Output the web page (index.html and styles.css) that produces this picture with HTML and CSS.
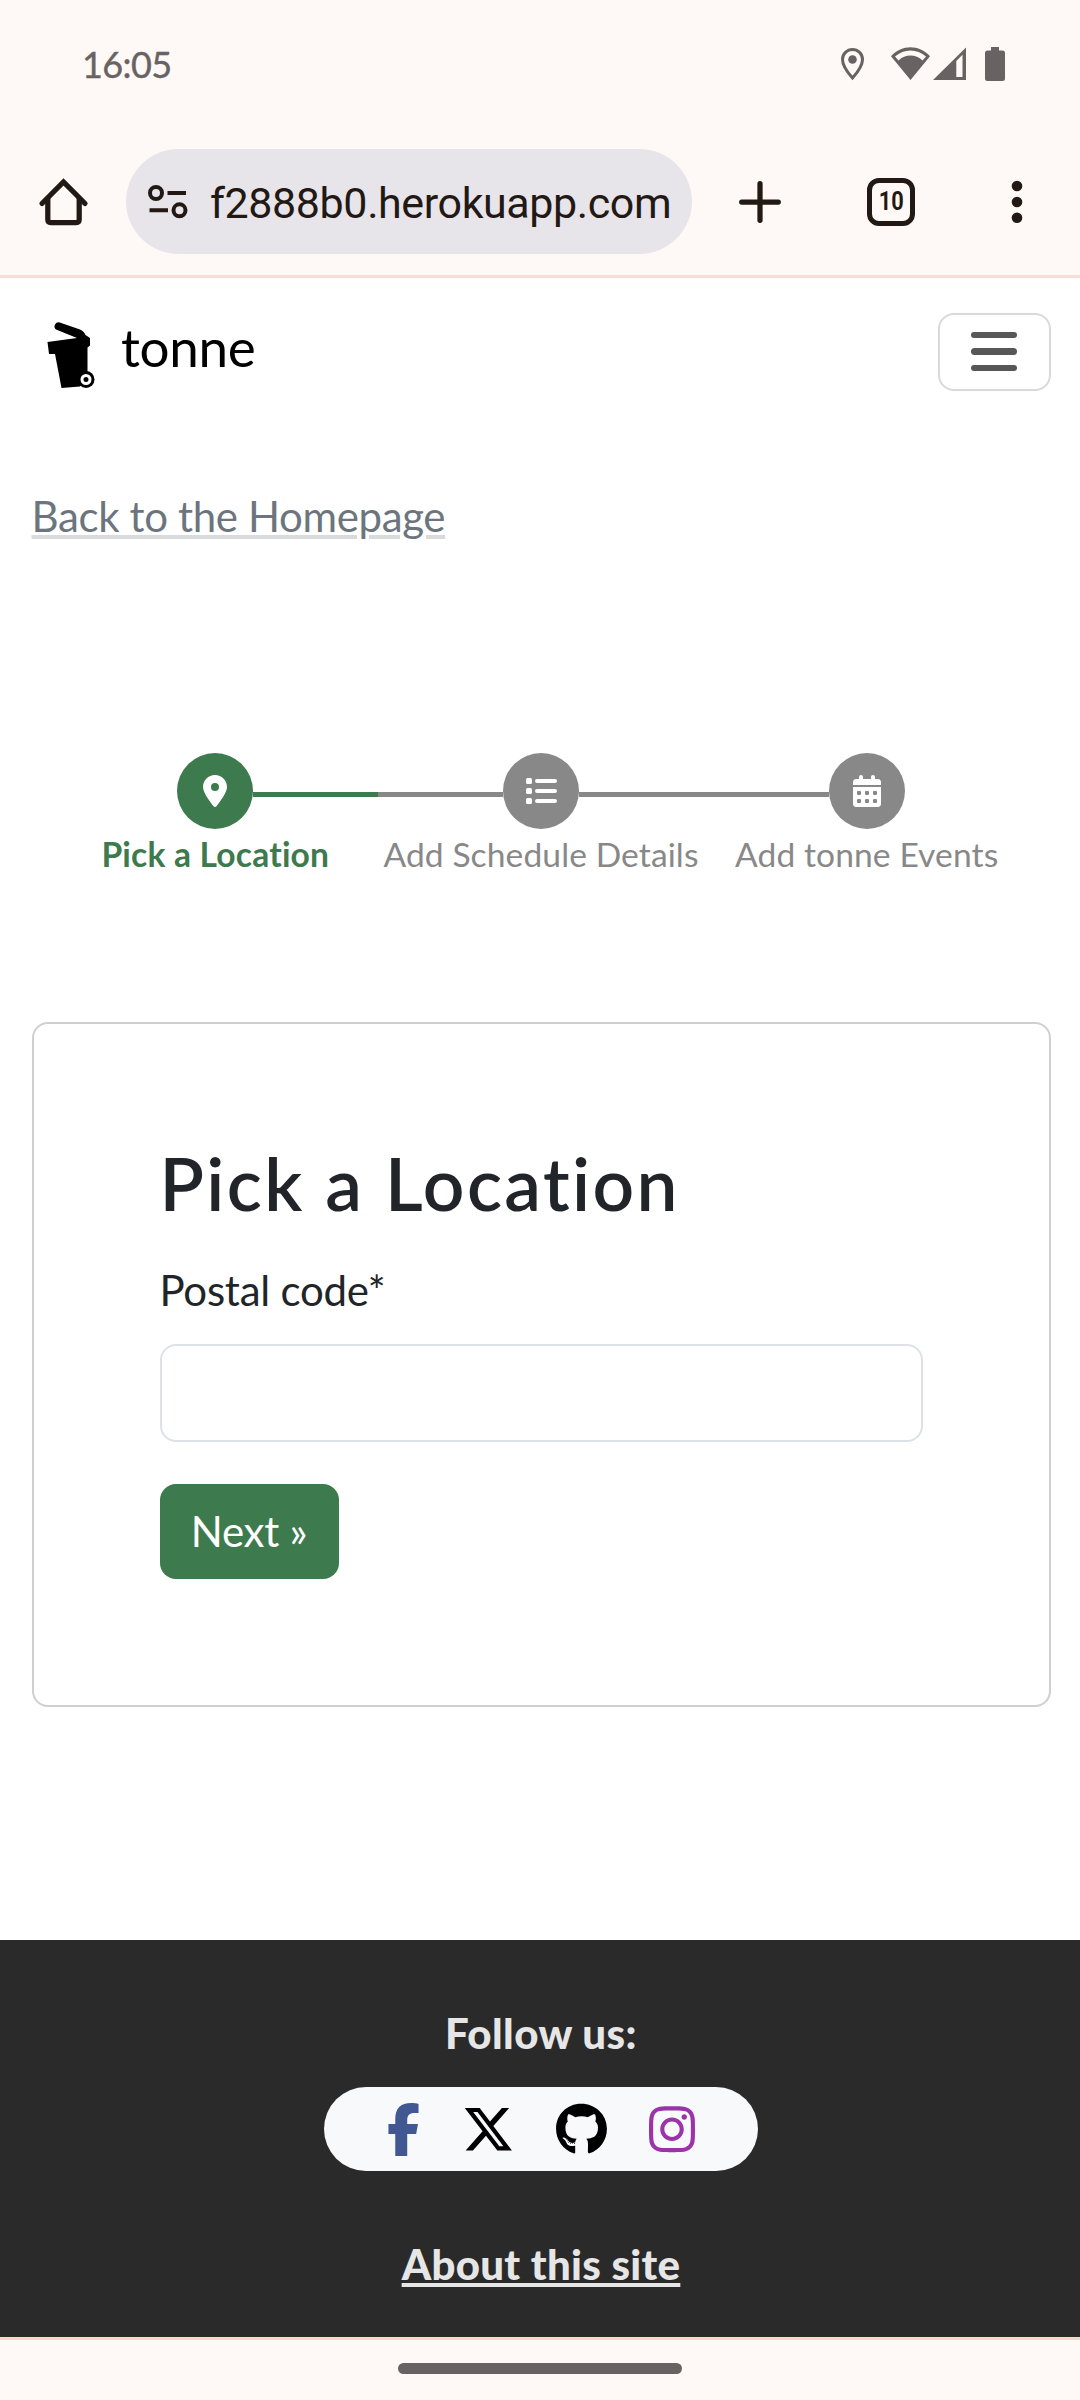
FILE: index.html
```html
<!DOCTYPE html>
<html lang="en">
<head>
<meta charset="utf-8">
<title>tonne</title>
<link rel="stylesheet" href="styles.css">
</head>
<body>
<header class="status">
  <span class="clock">16:05</span>
  <svg class="status-icons" viewBox="841 44 166 40" width="166" height="40" fill="#686362">
    <path d="M852.500 49.500a10 10 0 0 1 10 10c0 6.500-5.500 13.500-10 18.500c-4.500-5-10-12-10-18.500a10 10 0 0 1 10-10z" fill="none" stroke="#686362" stroke-width="3"/>
    <circle cx="852.500" cy="59.500" r="4.300"/>
    <path fill-rule="evenodd" d="M891 56.200C902 44.300 919 44.300 930 56.200L910.500 80zM895 56.500L898.500 60.500C905 53.800 916 53.800 922.500 60.500L926 56.500C917 48.500 904 48.500 895 56.500z"/>
    <path fill-rule="evenodd" d="M933 80L966 47.500V80zM956.300 61V77H962.500V54.800z"/>
    <path d="M991 47h8v3.500h3.500q2.500 0 2.500 2.500v25.500q0 2.500-2.500 2.500h-15q-2.500 0-2.500-2.500V53q0-2.500 2.500-2.500h3.500z"/>
  </svg>
</header>
<div class="toolbar">
  <svg class="home" viewBox="0 0 63 63" width="63" height="63" fill="none" stroke="#231914" stroke-width="5.250"><path d="M10 33.500L31.500 12L53 33.500" stroke-linecap="round"/><path d="M15.800 28V49.500q0 3 3 3h25.400q3 0 3-3V28"/></svg>
  <div class="omnibox">
    <svg viewBox="0 0 40 34" width="40" height="34" fill="none" stroke="#231914" stroke-width="4"><circle cx="8" cy="8" r="6"/><path d="M19.500 8H38M1.500 25.300H20"/><circle cx="31.500" cy="25.300" r="6"/></svg>
    <span>f2888b0.herokuapp.com</span>
  </div>
  <svg class="plus" viewBox="0 0 42 42" width="42" height="42" stroke="#231914" stroke-width="5.250" stroke-linecap="round"><path d="M21 2.700V39.300M2.700 21H39.300"/></svg>
  <div class="tabs"><span>10</span></div>
  <svg class="dots" viewBox="0 0 12 44" width="12" height="44" fill="#231914"><circle cx="6" cy="6" r="5.300"/><circle cx="6" cy="22" r="5.300"/><circle cx="6" cy="37.700" r="5.300"/></svg>
</div>
<nav class="navbar">
  <a class="brand">
    <svg viewBox="40 315 60 80" width="60" height="80"><path d="M59 322.300L80 329.500Q84 331 85.500 335L90 338V345.500L87.500 347.500V374L80 386.500L61.500 388L55 354H49L47.500 342L77 338L56 329.500Q53.500 327.500 55 324.500Q56.500 322 59 322.300z"/><circle cx="86" cy="379.500" r="8.500"/><circle cx="86" cy="379.500" r="4" fill="none" stroke="#fff" stroke-width="3"/></svg>
    <span>tonne</span>
  </a>
  <button class="toggler" aria-label="Menu"><i></i><i></i><i></i></button>
</nav>
<main>
  <a class="back">Back to the Homepage</a>
  <ol class="steps">
    <li class="step active"><div class="track"><span class="dot"><svg viewBox="0 0 384 512" width="24" height="32" fill="#fff"><path d="M215.700 499.200C267 435 384 279.400 384 192C384 86 298 0 192 0S0 86 0 192c0 87.400 117 243 168.300 307.200c12.300 15.300 35.100 15.300 47.400 0zM192 128a64 64 0 1 1 0 128 64 64 0 1 1 0-128z"/></svg></span></div><span class="label">Pick a Location</span></li>
    <li class="step"><div class="track"><span class="dot"><svg viewBox="0 0 512 512" width="32" height="32" fill="#fff"><rect x="16" y="48" width="96" height="96" rx="24"/><rect x="16" y="208" width="96" height="96" rx="24"/><rect x="16" y="368" width="96" height="96" rx="24"/><rect x="160" y="64" width="352" height="64" rx="32"/><rect x="160" y="224" width="352" height="64" rx="32"/><rect x="160" y="384" width="352" height="64" rx="32"/></svg></span></div><span class="label">Add Schedule Details</span></li>
    <li class="step"><div class="track"><span class="dot"><svg viewBox="0 0 448 512" width="28" height="32" fill="#fff"><path d="M128 0c17.700 0 32 14.300 32 32V64H288V32c0-17.700 14.300-32 32-32s32 14.300 32 32V64h48c26.500 0 48 21.500 48 48v32H0V112C0 85.500 21.500 64 48 64H96V32c0-17.700 14.300-32 32-32zM0 192H448V464c0 26.500-21.500 48-48 48H48c-26.500 0-48-21.500-48-48z"/><path d="M0 140H448V160H0z"/><g fill="#888"><rect x="64" y="256" width="64" height="64" rx="16"/><rect x="192" y="256" width="64" height="64" rx="16"/><rect x="320" y="256" width="64" height="64" rx="16"/><rect x="64" y="384" width="64" height="64" rx="16"/><rect x="192" y="384" width="64" height="64" rx="16"/><rect x="320" y="384" width="64" height="64" rx="16"/></g></svg></span></div><span class="label">Add tonne Events</span></li>
  </ol>
  <form class="card">
    <h1>Pick a Location</h1>
    <label for="postal">Postal code*</label>
    <input id="postal" type="text">
    <button class="next" type="button">Next »</button>
  </form>
</main>
<footer>
  <p class="follow">Follow us:</p>
  <div class="social">
    <svg viewBox="0 0 320 512" width="33" height="53" fill="#425893"><path d="M80 299.300V512H196V299.300h86.500l18-97.800H196V166.900c0-51.700 20.300-71.500 72.700-71.500c16.300 0 29.400 .4 37 1.200V7.900C291.400 4 256.400 0 236.200 0C129.300 0 80 50.500 80 159.400v42.100H14v97.800H80z"/></svg>
    <svg viewBox="0 0 512 512" width="52.500" height="52.500"><path d="M389.200 48h70.600L305.600 224.200 487 464H345L233.700 318.600 106.500 464H35.800L200.700 275.500 26.800 48H172.400L272.900 180.900 389.200 48zM364.400 421.800h39.100L151.100 88h-42L364.400 421.800z"/></svg>
    <svg viewBox="0 0 496 512" width="51" height="52.500"><path d="M165.900 397.400c0 2-2.300 3.600-5.200 3.600-3.300.3-5.600-1.300-5.600-3.600 0-2 2.300-3.600 5.200-3.600 3-.3 5.600 1.300 5.600 3.600zm-31.100-4.500c-.7 2 1.300 4.300 4.300 4.900 2.600 1 5.600 0 6.200-2s-1.300-4.300-4.300-5.200c-2.600-.7-5.500.3-6.200 2.300zm44.200-1.700c-2.900.7-4.900 2.600-4.600 4.900.3 2 2.900 3.300 5.900 2.600 2.900-.7 4.900-2.600 4.600-4.600-.3-1.900-3-3.200-5.900-2.900zM244.800 8C106.100 8 0 113.300 0 252c0 110.900 69.800 205.800 169.500 239.200 12.800 2.300 17.300-5.600 17.300-12.100 0-6.200-.3-40.400-.3-61.400 0 0-70 15-84.700-29.800 0 0-11.400-29.100-27.800-36.600 0 0-22.900-15.700 1.600-15.400 0 0 24.900 2 38.600 25.800 21.900 38.600 58.600 27.500 72.900 20.900 2.300-16 8.800-27.100 16-33.700-55.900-6.200-112.300-14.300-112.300-110.500 0-27.500 7.600-41.300 23.600-58.900-2.600-6.500-11.100-33.300 2.600-67.900 20.900-6.500 69 27 69 27 20-5.600 41.500-8.500 62.800-8.500s42.800 2.900 62.800 8.500c0 0 48.100-33.600 69-27 13.700 34.700 5.200 61.400 2.600 67.900 16 17.700 25.800 31.500 25.800 58.900 0 96.500-58.900 104.200-114.800 110.500 9.200 7.900 17 22.900 17 46.400 0 33.700-.3 75.400-.3 83.600 0 6.500 4.600 14.400 17.300 12.100C428.200 457.800 496 362.900 496 252 496 113.300 383.500 8 244.800 8zM97.200 352.900c-1.300 1-1 3.300.7 5.200 1.600 1.600 3.900 2.300 5.200 1 1.300-1 1-3.300-.7-5.200-1.600-1.600-3.900-2.300-5.200-1zm-10.800-8.100c-.7 1.300.3 2.900 2.300 3.900 1.600 1 3.600.7 4.300-.7.700-1.300-.3-2.900-2.300-3.900-2-.6-3.600-.3-4.300.7zm32.400 35.600c-1.600 1.300-1 4.300 1.300 6.200 2.300 2.300 5.200 2.600 6.500 1 1.300-1.300.7-4.300-1.300-6.200-2.200-2.300-5.200-2.600-6.500-1zm-11.400-14.700c-1.600 1-1.600 3.600 0 5.900 1.600 2.300 4.300 3.300 5.600 2.300 1.600-1.300 1.600-3.900 0-6.200-1.400-2.300-4-3.300-5.600-2z"/></svg>
    <svg viewBox="0 0 448 512" width="46" height="52.500" fill="#9b34a9"><path d="M224.100 141c-63.600 0-114.900 51.300-114.900 114.900s51.300 114.900 114.900 114.900S339 319.500 339 255.900 287.700 141 224.100 141zm0 189.600c-41.100 0-74.700-33.500-74.700-74.700s33.500-74.700 74.700-74.700 74.700 33.500 74.700 74.700-33.600 74.700-74.700 74.700zm146.400-194.300c0 14.900-12 26.800-26.800 26.800-14.900 0-26.800-12-26.800-26.800s12-26.800 26.800-26.800 26.800 12 26.800 26.800zm76.100 27.200c-1.700-35.900-9.900-67.700-36.200-93.900-26.200-26.200-58-34.400-93.900-36.200-37-2.100-147.900-2.100-184.900 0-35.800 1.700-67.600 9.900-93.900 36.100s-34.400 58-36.200 93.900c-2.100 37-2.100 147.900 0 184.900 1.700 35.900 9.900 67.700 36.200 93.900s58 34.400 93.900 36.200c37 2.100 147.900 2.100 184.900 0 35.900-1.700 67.700-9.900 93.900-36.200 26.200-26.200 34.400-58 36.200-93.900 2.100-37 2.100-147.800 0-184.800zM398.800 388c-7.800 19.600-22.900 34.700-42.600 42.600-29.500 11.700-99.500 9-132.100 9s-102.700 2.600-132.100-9c-19.600-7.800-34.700-22.900-42.600-42.600-11.700-29.500-9-99.500-9-132.100s-2.600-102.700 9-132.100c7.800-19.600 22.900-34.700 42.600-42.600 29.500-11.700 99.500-9 132.100-9s102.700-2.600 132.100 9c19.600 7.800 34.700 22.900 42.600 42.600 11.700 29.500 9 99.500 9 132.100s2.700 102.700-9 132.100z"/></svg>
  </div>
  <a class="about">About this site</a>
</footer>
<div class="gesture"><i></i></div>
</body>
</html>
```
FILE: styles.css
```css
* { box-sizing: border-box; }
body { margin: 0; width: 1080px; height: 2400px; display: flex; flex-direction: column; background: #fff; color: #212529; font-family: Lato, sans-serif; font-size: 42px; line-height: 63px; font-variant-ligatures: none; }
svg { display: block; flex: none; }

/* Device status bar */
.status { height: 128px; padding: 0 73px 0 82px; display: flex; align-items: center; justify-content: space-between; background: #fef9f6; }
.clock { font-size: 36px; letter-spacing: -0.6px; color: #686362; -webkit-text-stroke: 0.4px #686362; }

/* Browser toolbar */
.toolbar { height: 150px; padding: 0 57px 0 32px; display: flex; align-items: center; background: #fef9f6; border-bottom: 3px solid #f7ddd2; }
.omnibox { width: 566px; height: 105px; margin-left: 31px; padding-left: 22px; display: flex; align-items: center; gap: 22px; border-radius: 53px; background: #e8e5ea; color: #231914; font-family: Roboto, sans-serif; font-size: 43px; letter-spacing: -0.4px; white-space: nowrap; }
.omnibox span { padding-top: 3px; }
.plus { margin-left: 47px; }
.tabs { width: 48px; height: 48px; margin-left: 86px; display: flex; align-items: center; justify-content: center; border: 5px solid #231914; border-radius: 12px; color: #231914; font: bold 25px/38px Roboto, sans-serif; }
.tabs span { transform: scaleX(0.87); }
.dots { margin-left: 96px; }

/* Site navigation */
.navbar { height: 146px; padding: 0 29px 0 40px; display: flex; align-items: center; justify-content: space-between; }
.brand { margin-top: 8px; display: flex; align-items: center; color: #000; font-size: 53px; letter-spacing: -0.3px; }
.brand span { margin: 0 0 18px 21px; }
.toggler { width: 113px; height: 78px; margin-top: 2px; padding: 0 2px 1px 0; display: flex; flex-direction: column; align-items: center; justify-content: center; gap: 10px; background: none; border: 2px solid #d9d9d9; border-radius: 16px; }
.toggler i { width: 46px; height: 6.5px; border-radius: 4px; background: #565756; }

/* Page body */
main { flex: none; height: 1516px; padding: 61px 29px 0 31.5px; }
.back { display: block; color: #6c757d; letter-spacing: -0.36px; text-decoration: underline; text-decoration-color: #d9dadc; text-decoration-thickness: 4px; text-underline-offset: 3px; }

/* Progress steps */
.steps { height: 269px; margin: 205px 0 0; padding: 0 21.5px 0 21px; display: grid; grid-template-columns: repeat(3, 1fr); list-style: none; }
.step { display: flex; flex-direction: column; align-items: center; color: #888; font-size: 33.6px; line-height: 50px; letter-spacing: 0.1px; white-space: nowrap; }
.track { width: 100%; display: flex; align-items: center; }
.track::before, .track::after { content: ""; flex: 1; height: 5px; margin-top: 7px; background: #888; }
.step:first-child .track::before, .step:last-child .track::after { background: none; }
.dot { width: 76px; height: 76px; display: flex; align-items: center; justify-content: center; border-radius: 50%; background: #888; }
.active { color: #3d7a4d; font-weight: bold; letter-spacing: 0.2px; }
.active .dot, .active .track::after { background: #3d7a4d; }

/* Form card */
.card { height: 685px; margin: 0; padding: 119px 126px 0; display: flex; flex-direction: column; align-items: flex-start; border: 2px solid #cfcfd0; border-radius: 16px; }
h1 { margin: 0 0 36px; font-size: 73px; font-weight: 600; line-height: 80px; letter-spacing: 2.4px; }
label { margin-bottom: 22px; letter-spacing: -0.25px; }
input { width: 100%; height: 98px; margin: 0 0 42px; border: 2px solid #dee2e6; border-radius: 16px; background: #fff; }
.next { width: 179px; height: 95px; padding: 0; border: 0; border-radius: 16px; background: #3d7a4d; color: #fff; font: inherit; letter-spacing: -0.3px; }

/* Footer */
footer { flex: none; height: 397px; padding: 62px 0 0 2px; display: flex; flex-direction: column; align-items: center; background: #2a2a2a; color: #e6e6e6; font-weight: 900; }
.follow { margin: 0 0 22px; letter-spacing: 0.4px; }
.social { width: 434px; height: 84px; margin-bottom: 62px; display: flex; align-items: center; justify-content: center; gap: 42px; border-radius: 42px; background: #f8f9fb; }
.about { letter-spacing: 0.3px; text-decoration: underline; text-decoration-thickness: 4px; text-underline-offset: 3px; }

/* Gesture bar */
.gesture { height: 63px; display: flex; justify-content: center; background: #fef9f6; border-top: 3px solid #fbd6ca; }
.gesture i { width: 284px; height: 11px; margin-top: 23px; border-radius: 6px; background: #686362; }
```
